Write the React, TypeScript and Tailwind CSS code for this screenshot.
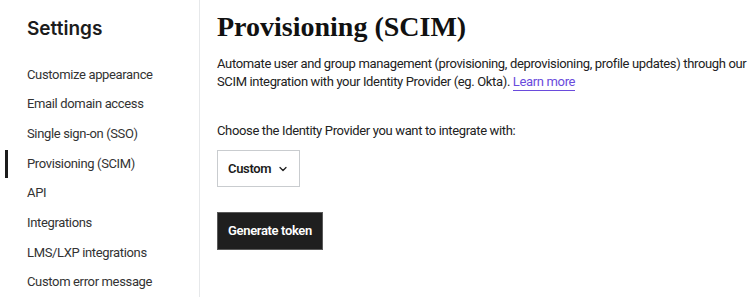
import { ChevronDown } from 'lucide-react'

const items = [
  'Customize appearance',
  'Email domain access',
  'Single sign-on (SSO)',
  'Provisioning (SCIM)',
  'API',
  'Integrations',
  'LMS/LXP integrations',
  'Custom error message',
]

export default function App() {
  return (
    <div className="flex h-[297px] w-[750px] overflow-hidden bg-white text-[#1c1c1c] font-['Roboto',sans-serif] tracking-[-0.35px]">
      <aside className="w-[200px] shrink-0 border-r border-[#e6e8ea] pl-[27px] pt-[17px]">
        <h2 className="font-['Inter',sans-serif] text-[19px] font-semibold leading-[24px] tracking-normal">Settings</h2>
        <nav className="mt-[18.5px] flex flex-col">
          {items.map(label => (
            <div key={label} className="relative flex h-[29.7px] items-center text-[13px] text-[#333]">
              {label === 'Provisioning (SCIM)' && (
                <span className="absolute left-[-22px] top-[1px] h-[28px] w-[3px] bg-[#1c1c1c]" />
              )}
              {label}
            </div>
          ))}
        </nav>
      </aside>

      <main className="flex-1 pl-[17px] pt-[8px]">
        <h1 className="font-['Liberation_Serif',serif] text-[28px] font-bold leading-[38px] text-[#111] tracking-normal">
          Provisioning (SCIM)
        </h1>
        <p className="mt-[9px] text-[13px] leading-[18px] text-[#222] whitespace-nowrap">
          Automate user and group management (provisioning, deprovisioning, profile updates) through our
          <br />
          SCIM integration with your Identity Provider (eg. Okta).{' '}
          <a className="text-[#6a4bdc] border-b border-[#6a4bdc] pb-[1px]">Learn more</a>
        </p>
        <p className="mt-[31px] text-[13px] leading-[18px] text-[#222]">
          Choose the Identity Provider you want to integrate with:
        </p>
        <button className="mt-[10px] flex h-[37px] w-[83px] items-center gap-[6px] border border-[#c9cccf] pl-[10px] text-[13px] font-semibold">
          Custom
          <ChevronDown size={12} strokeWidth={2.5} />
        </button>
        <button className="mt-[25px] flex h-[38px] w-[106px] items-center justify-center border border-[#5a5a5a] bg-[#1f1f1f] text-[13px] font-semibold text-white">
          Generate token
        </button>
      </main>
    </div>
  )
}
